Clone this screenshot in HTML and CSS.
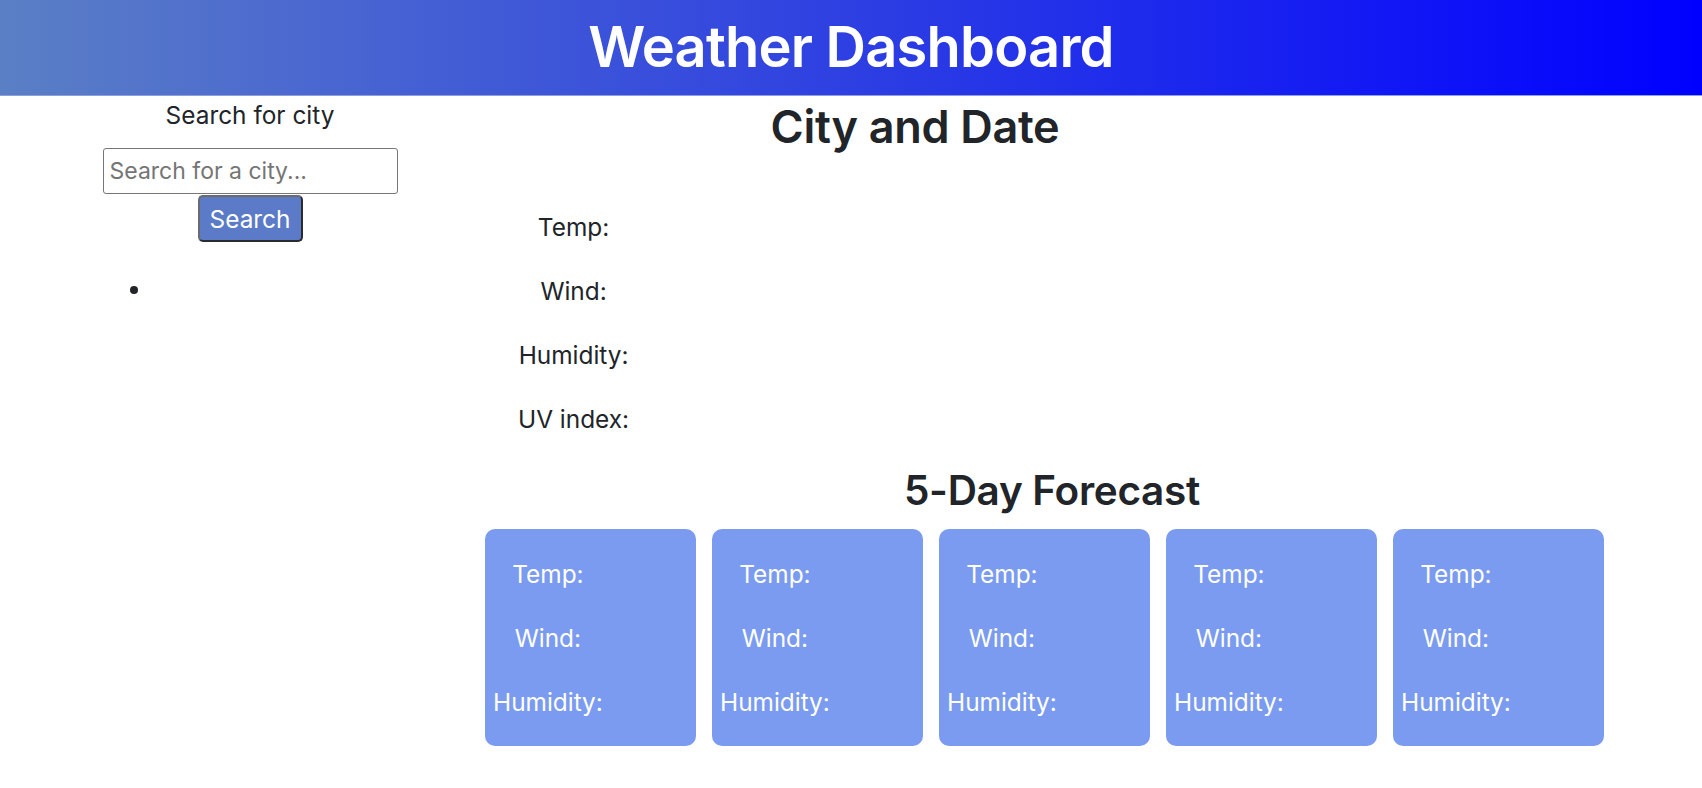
FILE: index.html
```html
<!DOCTYPE html>
<html lang="en">
<head>
<meta charset="utf-8">
<title>Weather Dashboard</title>
<link rel="stylesheet" href="styles.css">
</head>
<body>
<header class="top-bar">
  <h1 class="top-title">Weather Dashboard</h1>
</header>
<div class="layout">
  <aside class="sidebar">
    <p class="search-label">Search for city</p>
    <input class="search-input" type="text" placeholder="Search for a city...">
    <button class="search-btn" type="button">Search</button>
    <ul class="history">
      <li></li>
    </ul>
  </aside>
  <main class="main">
    <section class="current">
      <h2 class="section-title">City and Date</h2>
      <div class="stats">
        <p class="stat">Temp:</p>
        <p class="stat">Wind:</p>
        <p class="stat">Humidity:</p>
        <p class="stat">UV index:</p>
      </div>
    </section>
    <section class="forecast">
      <h3 class="forecast-title">5-Day Forecast</h3>
      <div class="cards">
        <div class="card"><div class="card-body"><p class="stat">Temp:</p><p class="stat">Wind:</p><p class="stat">Humidity:</p></div></div>
        <div class="card"><div class="card-body"><p class="stat">Temp:</p><p class="stat">Wind:</p><p class="stat">Humidity:</p></div></div>
        <div class="card"><div class="card-body"><p class="stat">Temp:</p><p class="stat">Wind:</p><p class="stat">Humidity:</p></div></div>
        <div class="card"><div class="card-body"><p class="stat">Temp:</p><p class="stat">Wind:</p><p class="stat">Humidity:</p></div></div>
        <div class="card"><div class="card-body"><p class="stat">Temp:</p><p class="stat">Wind:</p><p class="stat">Humidity:</p></div></div>
      </div>
    </section>
  </main>
</div>
</body>
</html>
```
FILE: styles.css
```css
* { box-sizing: border-box; }

body {
  margin: 0;
  font-family: Inter, "Liberation Sans", Arial, sans-serif;
  font-size: 24.4px;
  line-height: 38.4px;
  color: #212529;
  background: #ffffff;
}

.top-bar {
  height: 96px;
  display: flex;
  align-items: center;
  justify-content: center;
  background: linear-gradient(to right, #5b7fc5, #0000ff);
  border-bottom: 1px solid #8aa0e0;
}

.top-title {
  margin: 0;
  color: #ffffff;
  font-size: 56px;
  font-weight: 600;
  line-height: 1.2;
  letter-spacing: -0.8px;
}

.layout {
  display: flex;
  align-items: flex-start;
}

.sidebar {
  flex: 0 0 460px;
  padding-left: 40px;
  text-align: center;
}

.search-label {
  margin: 0 0 14px;
  line-height: 38.4px;
}

.search-input {
  display: block;
  margin: 0 auto;
  width: 295px;
  height: 46px;
  padding: 0 6px;
  font-family: inherit;
  font-size: 23px;
  color: #212529;
  border: 1px solid #767676;
  border-radius: 3px;
  background: #ffffff;
}

.search-input::placeholder {
  color: #757575;
}

.search-btn {
  display: block;
  margin: 1px auto 0;
  width: 105px;
  height: 47px;
  padding: 0;
  font-family: inherit;
  font-size: 24.4px;
  color: #ffffff;
  background: #5b7bc8;
  border: 2px solid #2b2b2b;
  border-top-color: #6b6b6b;
  border-left-color: #6b6b6b;
  border-radius: 5px;
}

.history {
  margin: 28px 0 0;
  padding-left: 113px;
  text-align: left;
  line-height: 38.4px;
}

.history li {
  height: 38.4px;
}

.main {
  flex: 1;
}

.current {
  width: 910px;
}

.section-title {
  margin: 4px 0 0;
  font-size: 45px;
  font-weight: 600;
  line-height: 1.2;
  letter-spacing: -0.3px;
  text-align: center;
}

.stats {
  width: fit-content;
  margin: 54px 0 0 58px;
  text-align: center;
}

.stat {
  margin: 0 0 25.6px;
  line-height: 38.4px;
}

.forecast {
  margin-left: 25px;
  width: 1134px;
}

.forecast-title {
  margin: 29px 0 13px;
  font-size: 40.5px;
  font-weight: 600;
  line-height: 1.2;
  letter-spacing: -0.3px;
  text-align: center;
}

.cards {
  display: flex;
  gap: 16px;
}

.card {
  width: 211px;
  height: 217px;
  padding: 25.6px 8px 0;
  background: #7a9bf0;
  border-radius: 10px;
  color: #ffffff;
}

.card-body {
  width: fit-content;
  text-align: center;
}
```
